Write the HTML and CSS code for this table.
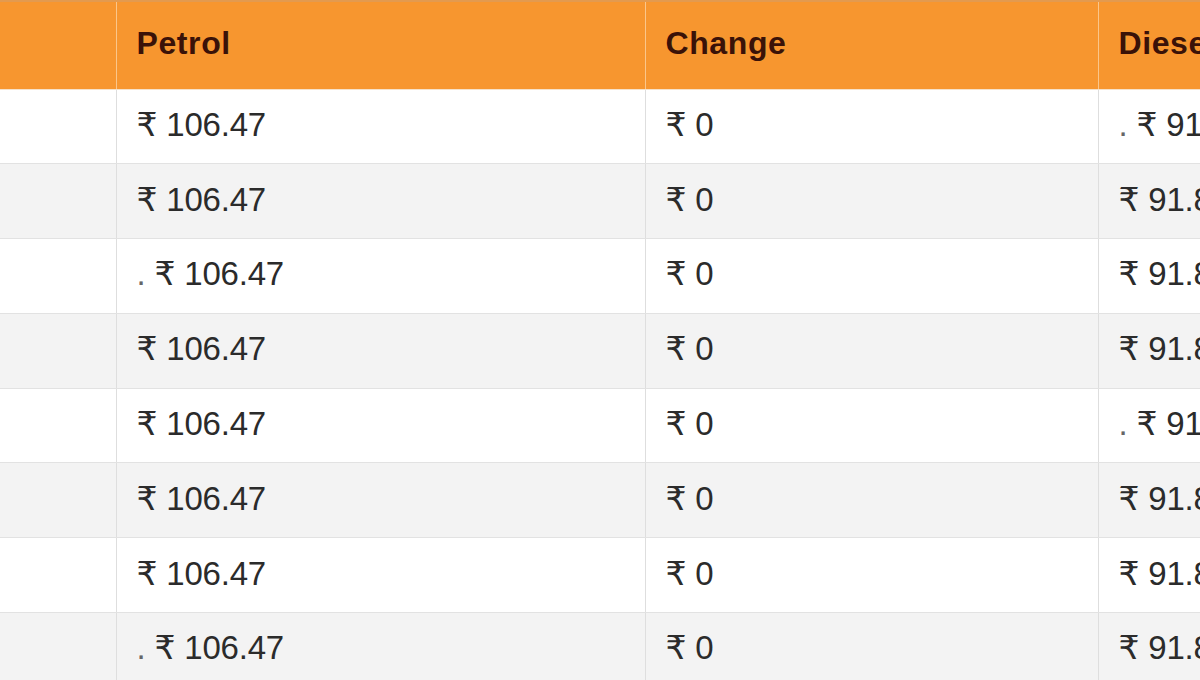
FILE: index.html
```html
<!DOCTYPE html>
<html lang="en">
<head>
<meta charset="utf-8">
<title>Fuel prices</title>
<link rel="stylesheet" href="styles.css">
</head>
<body>
<div class="frame">
  <table class="prices">
    <colgroup>
      <col class="c-city">
      <col class="c-petrol">
      <col class="c-change">
      <col class="c-diesel">
    </colgroup>
    <thead>
      <tr>
        <th></th>
        <th>Petrol</th>
        <th>Change</th>
        <th>Diesel</th>
      </tr>
    </thead>
    <tbody>
      <tr><td></td><td>₹ 106.47</td><td>₹ 0</td><td><span class="dot">.</span>₹ 91.87</td></tr>
      <tr><td></td><td>₹ 106.47</td><td>₹ 0</td><td>₹ 91.87</td></tr>
      <tr><td></td><td><span class="dot">.</span>₹ 106.47</td><td>₹ 0</td><td>₹ 91.87</td></tr>
      <tr><td></td><td>₹ 106.47</td><td>₹ 0</td><td>₹ 91.87</td></tr>
      <tr><td></td><td>₹ 106.47</td><td>₹ 0</td><td><span class="dot">.</span>₹ 91.87</td></tr>
      <tr><td></td><td>₹ 106.47</td><td>₹ 0</td><td>₹ 91.87</td></tr>
      <tr><td></td><td>₹ 106.47</td><td>₹ 0</td><td>₹ 91.87</td></tr>
      <tr><td></td><td><span class="dot">.</span>₹ 106.47</td><td>₹ 0</td><td>₹ 91.87</td></tr>
    </tbody>
  </table>
</div>
</body>
</html>
```

FILE: styles.css
```css
html, body {
  margin: 0;
  padding: 0;
  background: #ffffff;
}

.frame {
  width: 1200px;
  height: 680px;
  overflow: hidden;
}

.prices {
  width: 1400px;
  table-layout: fixed;
  border-collapse: collapse;
  font-family: "Liberation Sans", Arial, "DejaVu Sans", sans-serif;
}

.c-city { width: 116px; }
.c-petrol { width: 529px; }
.c-change { width: 453px; }
.c-diesel { width: 302px; }

.prices th {
  height: 88px;
  padding: 0 0 4px 20px;
  text-align: left;
  vertical-align: middle;
  background: #f7962f;
  color: #3a1208;
  font-size: 32px;
  letter-spacing: 0.6px;
  font-weight: bold;
  border-top: 2px solid #e39a4f;
  border-left: 1px solid #fbc68a;
  border-bottom: 1px solid #f6e1c8;
  box-sizing: border-box;
}

.prices th:first-child { border-left: none; }

.prices td {
  height: 74.8px;
  padding: 0 0 4px 20px;
  box-sizing: border-box;
  vertical-align: middle;
  color: #2b2b2b;
  font-size: 33px;
  letter-spacing: -0.2px;
  white-space: nowrap;
  border-left: 1px solid #dedede;
  border-bottom: 1px solid #e2e2e2;
}

.prices td:first-child { border-left: none; }

.prices tbody tr:nth-child(even) td {
  background: #f3f3f3;
}

.dot {
  margin-right: 9px;
  color: #666;
}
```
